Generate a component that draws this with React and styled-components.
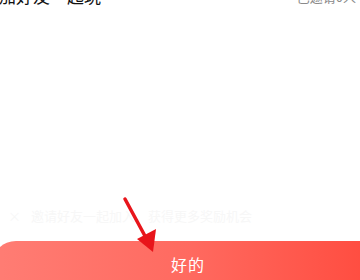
import styled, { createGlobalStyle } from "styled-components";

const Global = createGlobalStyle`
  html, body {
    margin: 0;
    padding: 0;
    background: #ffffff;
  }
  body {
    font-family: "Noto Sans CJK SC", "Noto Sans", sans-serif;
  }
`;

const Page = styled.div`
  position: relative;
  width: 360px;
  height: 280px;
  overflow: hidden;
  display: flex;
  flex-direction: column;
  background: #fff;
`;

const Header = styled.div`
  display: flex;
  justify-content: space-between;
  align-items: flex-end;
  margin-top: -15px;
  padding: 0 4px 0 0;
  height: 22px;
`;

const Title = styled.div`
  font-size: 17px;
  line-height: 22px;
  color: #111;
  margin-left: -1px;
`;

const Count = styled.div`
  font-size: 13px;
  line-height: 18px;
  color: #8a8a8a;
  margin-bottom: 1px;
`;

const Spacer = styled.div`
  flex: 1;
`;

const Ghost = styled.div`
  display: flex;
  align-items: center;
  gap: 10px;
  padding: 0 8px;
  height: 24px;
  margin-bottom: 14px;
  font-size: 13px;
  color: #f7f7f7;
  white-space: nowrap;
`;

const Button = styled.div`
  margin-left: -8px;
  width: 392px;
  height: 45px;
  flex-shrink: 0;
  margin-bottom: -6px;
  border-radius: 24px 0 0 0;
  background: linear-gradient(90deg, #ff7d74 0%, #ff6a60 50%, #ff4a3d 100%);
  display: flex;
  align-items: center;
  justify-content: center;
  color: #fff;
  font-size: 16px;
  letter-spacing: 1px;
`;

const Arrow = styled.svg`
  position: absolute;
  left: 0;
  top: 0;
  pointer-events: none;
`;

export default function App() {
  return (
    <Page>
      <Global />
      <Header>
        <Title>加好友一起玩</Title>
        <Count>已邀请0人</Count>
      </Header>
      <Spacer />
      <Ghost>
        <span>×</span>
        <span>邀请好友一起加入，获得更多奖励机会</span>
      </Ghost>
      <Button>好的</Button>
      <Arrow width="360" height="280" viewBox="0 0 360 280">
        <line x1="125" y1="199" x2="145" y2="236" stroke="#e8151b" strokeWidth="3.5" strokeLinecap="round" />
        <polygon points="153,252 137,239 156,229" fill="#e8151b" />
      </Arrow>
    </Page>
  );
}
